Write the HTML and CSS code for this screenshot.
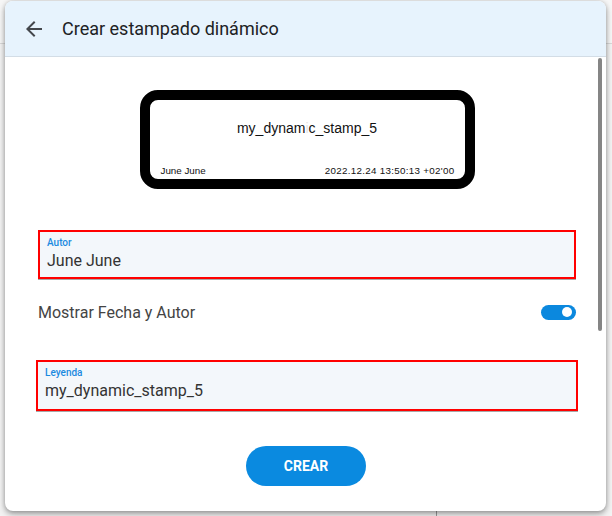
FILE: index.html
```html
<!DOCTYPE html>
<html lang="es">
<head>
    <meta charset="UTF-8">
    <meta name="viewport" content="width=device-width, initial-scale=1.0">
    <title>Crear estampado dinámico</title>
    <link rel="stylesheet" href="styles.css">
</head>
<body>
    <div class="backdrop">
        <div class="backdrop-bar"></div>
        <div class="backdrop-split"></div>
    </div>

    <div class="dialog">
        <div class="dialog-header">
            <button class="back-btn" aria-label="Volver">
                <svg width="24" height="24" viewBox="0 0 24 24">
                    <path d="M20 11H7.83l5.59-5.59L12 4l-8 8 8 8 1.41-1.41L7.83 13H20v-2z" fill="#44474c"/>
                </svg>
            </button>
            <h2>Crear estampado dinámico</h2>
        </div>

        <div class="dialog-body">
            <div class="stamp">
                <div class="stamp-title">my_dynam<span class="ghost">i</span>c_stamp_5</div>
                <div class="stamp-footer">
                    <span>June June</span>
                    <span class="stamp-date">2022.12.24 13:50:13 +02'00</span>
                </div>
            </div>

            <div class="field">
                <label>Autor</label>
                <div class="field-value">June June</div>
            </div>

            <div class="toggle-row">
                <span>Mostrar Fecha y Autor</span>
                <div class="switch on"><div class="knob"></div></div>
            </div>

            <div class="field wide">
                <label>Leyenda</label>
                <div class="field-value">my_dynamic_stamp_5</div>
            </div>

            <div class="actions">
                <button class="create-button">CREAR</button>
            </div>
        </div>

        <div class="scrollbar"></div>
    </div>
</body>
</html>
```

FILE: styles.css
```css
body {
    margin: 0;
    padding: 0;
    font-family: Roboto, 'Noto Sans', sans-serif;
    background: #f3f3f3;
    width: 612px;
    height: 516px;
    overflow: hidden;
    position: relative;
}

.backdrop {
    position: absolute;
    inset: 0;
}

.backdrop-bar {
    height: 43px;
    border-bottom: 1px solid #d8d8d8;
    background: #f6f6f6;
}

.backdrop-split {
    position: absolute;
    left: 436px;
    top: 44px;
    bottom: 0;
    border-left: 1px solid #9a9a9a;
}

.dialog {
    position: absolute;
    left: 5px;
    top: 1px;
    width: 601px;
    height: 510px;
    background: #fff;
    border-radius: 8px;
    box-shadow: 0 3px 6px rgba(0, 0, 0, 0.35), 0 0 4px rgba(0, 0, 0, 0.15);
    overflow: hidden;
}

.dialog-header {
    height: 56px;
    background: #e7f3fd;
    border-bottom: 1px solid #d3dde6;
    display: flex;
    align-items: center;
    box-sizing: border-box;
    padding-left: 17px;
}

.back-btn {
    border: none;
    background: none;
    padding: 0;
    width: 24px;
    height: 24px;
    display: flex;
    margin-right: 16px;
}

.dialog-header h2 {
    margin: 0;
    font-size: 18px;
    font-weight: 400;
    color: #202124;
}

.dialog-body {
    padding: 33px 30px 0 33px;
}

.stamp {
    width: 335px;
    height: 99px;
    margin: 0 auto;
    box-sizing: border-box;
    border: 10px solid #000;
    border-radius: 18px;
    font-family: 'Liberation Sans', Arial, sans-serif;
    color: #111;
    display: flex;
    flex-direction: column;
    justify-content: space-between;
}

.stamp-title {
    text-align: center;
    font-size: 14px;
    padding-top: 20px;
}

.ghost {
    color: #e4e4e4;
}

.stamp-footer {
    display: flex;
    justify-content: space-between;
    font-size: 9.8px;
    padding: 0 10px 3px 11px;
}

.stamp-date {
    letter-spacing: 0.3px;
}

.field {
    margin-top: 41px;
    height: 49px;
    box-sizing: border-box;
    border: 2px solid #f00;
    background: #f3f7fb;
    padding: 5px 7px 0;
    box-shadow: 0 1px 0 #a8a8a8;
}

.field label {
    display: block;
    font-size: 10px;
    line-height: 12px;
    font-weight: 500;
    color: #1b8ae0;
}

.field-value {
    font-size: 16px;
    line-height: 20px;
    margin-top: 2px;
    color: #333;
}

.field.wide {
    margin: 0 -2px;
    height: 51px;
}

.toggle-row {
    display: flex;
    justify-content: space-between;
    align-items: center;
    height: 24px;
    margin: 21px 0 36px 0;
    font-size: 16px;
    color: #444;
}

.switch {
    width: 35px;
    height: 15px;
    border-radius: 8px;
    background: #0b88de;
    position: relative;
}

.knob {
    position: absolute;
    right: 4px;
    top: 2.5px;
    width: 10px;
    height: 10px;
    border-radius: 50%;
    background: #fff;
}

.actions {
    display: flex;
    justify-content: center;
    margin-top: 35px;
}

.create-button {
    width: 120px;
    height: 40px;
    border: none;
    border-radius: 20px;
    background: #0a8ae0;
    color: #fff;
    font-family: Roboto, sans-serif;
    font-size: 14px;
    font-weight: 700;
    margin-right: 2px;
}

.scrollbar {
    position: absolute;
    right: 4px;
    top: 57px;
    width: 4px;
    height: 273px;
    border-radius: 2px;
    background: #858585;
}
```
